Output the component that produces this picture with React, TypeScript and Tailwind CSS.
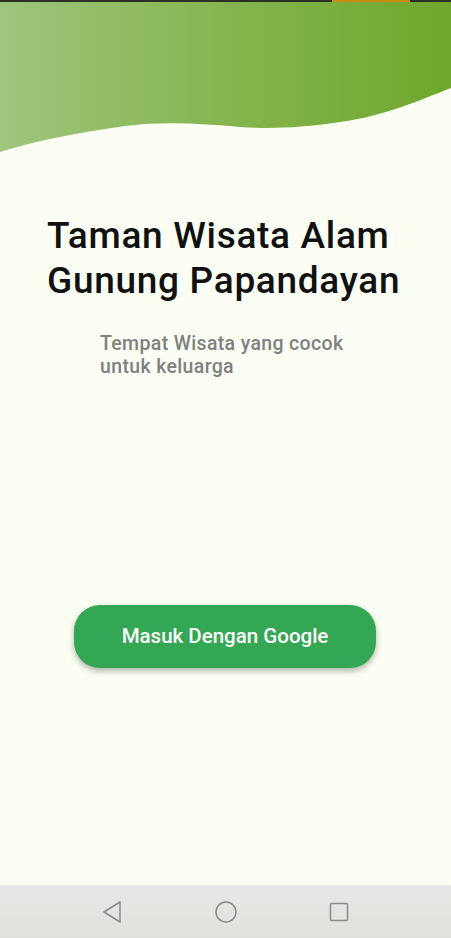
export default function App() {
  return (
    <div className="flex h-[938px] w-[451px] flex-col overflow-hidden bg-[#fbfef3] font-['Roboto',sans-serif]">
      <svg className="block shrink-0" width="451" height="152" viewBox="0 0 451 152">
        <defs>
          <linearGradient id="hdr" x1="0" y1="0" x2="1" y2="0">
            <stop offset="0" stopColor="#9fc47d" />
            <stop offset="0.5" stopColor="#86b54f" />
            <stop offset="1" stopColor="#6ea72b" />
          </linearGradient>
        </defs>
        <path
          d="M0,0 H451 V88 C420,100 385,116 340,122 C300,128 270,129 240,127 C205,124 165,121 125,126 C75,133 35,141 0,152 Z"
          fill="url(#hdr)"
        />
        <rect x="0" y="0" width="451" height="2" fill="#2b2f25" />
        <rect x="332" y="0" width="78" height="2" fill="#c98a12" />
      </svg>

      <div className="flex flex-1 flex-col">
        <h1 className="ml-[47px] mt-[61px] text-[37px] font-medium leading-[45px] tracking-[0.7px] text-[#111111]">
          Taman Wisata Alam
          <br />
          Gunung Papandayan
        </h1>
        <p className="ml-[100px] mt-[29px] text-[19.5px] font-medium leading-[23px] tracking-[0.35px] text-[#808080]">
          Tempat Wisata yang cocok
          <br />
          untuk keluarga
        </p>
        <button className="ml-[74px] mt-[227px] flex h-[63px] w-[302px] items-center justify-center rounded-[26px] bg-[#33a753] text-[20.5px] font-medium text-white shadow-[0_3px_6px_rgba(0,0,0,0.3)]">
          Masuk Dengan Google
        </button>
      </div>

      <div className="flex h-[53px] shrink-0 items-center justify-center bg-gradient-to-b from-[#e7e8e5] to-[#dfe1dd]">
        <div className="flex w-[250px] items-center justify-between">
          <svg width="24" height="24" viewBox="0 0 24 24" fill="none" stroke="#8a8a8a" strokeWidth="1.5" strokeLinejoin="round">
            <path d="M19 2 L3 12 L19 22 Z" />
          </svg>
          <svg width="24" height="24" viewBox="0 0 24 24" fill="none" stroke="#8a8a8a" strokeWidth="1.5">
            <circle cx="12" cy="12" r="10" />
          </svg>
          <svg width="24" height="24" viewBox="0 0 24 24" fill="none" stroke="#8a8a8a" strokeWidth="1.5">
            <rect x="3.5" y="3.5" width="17" height="17" rx="1" />
          </svg>
        </div>
      </div>
    </div>
  )
}
